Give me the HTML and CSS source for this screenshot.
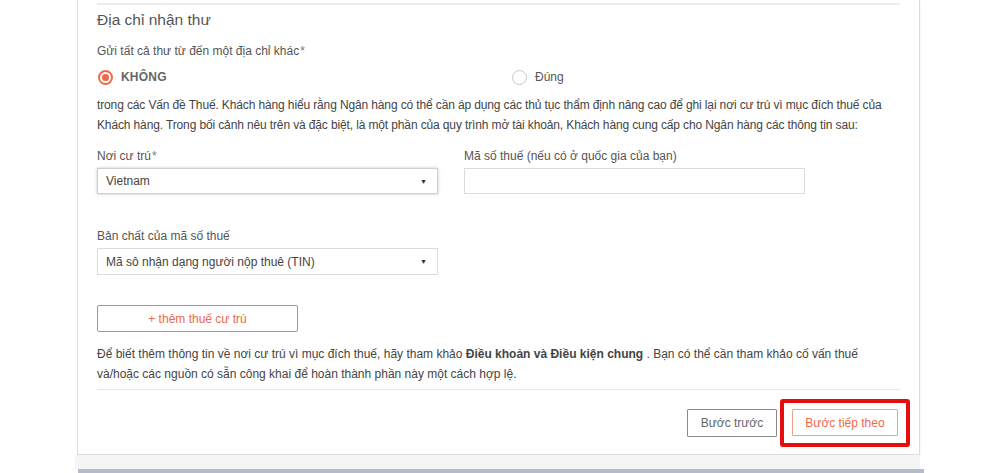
FILE: index.html
```html
<!DOCTYPE html>
<html lang="vi">
<head>
<meta charset="utf-8">
<link rel="stylesheet" href="styles.css">
</head>
<body>
<div class="page">
  <div class="card">
    <div class="top-rule"></div>
    <h2 class="title">Địa chỉ nhận thư</h2>
    <div class="label q">Gửi tất cả thư từ đến một địa chỉ khác<span class="star">*</span></div>
    <div class="radios">
      <label class="radio-item checked"><span class="radio"><span class="dot"></span></span><span class="rlabel strong">KHÔNG</span></label>
      <label class="radio-item"><span class="radio"></span><span class="rlabel">Đúng</span></label>
    </div>
    <p class="para first">trong các Vấn đề Thuế. Khách hàng hiểu rằng Ngân hàng có thể cần áp dụng các thủ tục thẩm định nâng cao để ghi lại nơi cư trú vì mục đích thuế của Khách hàng. Trong bối cảnh nêu trên và đặc biệt, là một phần của quy trình mở tài khoản, Khách hàng cung cấp cho Ngân hàng các thông tin sau:</p>
    <div class="row">
      <div class="field">
        <div class="label">Nơi cư trú<span class="star">*</span></div>
        <div class="select focused"><span>Vietnam</span><span class="caret">▼</span></div>
      </div>
      <div class="field">
        <div class="label">Mã số thuế (nếu có ở quốc gia của bạn)</div>
        <div class="input"></div>
      </div>
    </div>
    <div class="field solo">
      <div class="label">Bản chất của mã số thuế</div>
      <div class="select tall"><span>Mã sô nhận dạng người nộp thuê (TIN)</span><span class="caret">▼</span></div>
    </div>
    <button class="add-btn">+ thêm thuế cư trú</button>
    <p class="para second">Để biết thêm thông tin về nơi cư trú vì mục đích thuế, hãy tham khảo <b>Điều khoản và Điều kiện chung</b> . Bạn có thể cần tham khảo cố vấn thuế và/hoặc các nguồn có sẵn công khai để hoàn thành phần này một cách hợp lệ.</p>
    <div class="rule"></div>
    <div class="actions">
      <button class="btn prev">Bước trước</button>
      <div class="highlight"><button class="btn next">Bước tiếp theo</button></div>
    </div>
  </div>
  <div class="under"></div>
  <div class="bar"></div>
</div>
</body>
</html>
```

FILE: styles.css
```css
* { box-sizing: border-box; }
html, body { margin: 0; padding: 0; background: #fff; }
body {
  font-family: "Liberation Sans", Arial, sans-serif;
  font-size: 12px;
  color: #444;
  width: 1000px;
  height: 473px;
  overflow: hidden;
}
.page {
  margin-left: 77px;
  width: 843px;
}
.card {
  border: 1px solid #dcdcdc;
  border-top: none;
  height: 455px;
  padding: 3px 19px 0 19px;
  background: #fff;
  box-shadow: 1px 1px 2px rgba(0,0,0,0.04);
}
.top-rule { height: 2px; background: #ececec; }
.title {
  margin: 5px 0 0 0;
  font-weight: normal;
  font-size: 15.5px;
  line-height: 20px;
  color: #555;
}
.label { line-height: 16px; color: #555; font-size: 12px; }
.star { color: #777; margin-left: 1px; }
.q { margin-top: 13px; }
.radios {
  display: grid;
  grid-template-columns: 414px 1fr;
  margin-top: 8px;
  height: 20px;
  align-items: center;
}
.radio-item { display: flex; align-items: center; }
.radio {
  width: 15px; height: 15px;
  border-radius: 50%;
  border: 1px solid #c8c8c8;
  display: flex; align-items: center; justify-content: center;
  margin-left: 1px;
}
.checked .radio { border: 2px solid #ef6a4a; }
.dot { width: 7px; height: 7px; border-radius: 50%; background: #ef6a4a; }
.rlabel { margin-left: 8px; color: #555; }
.strong { font-weight: bold; color: #666; letter-spacing: 0.2px; }
.para { margin: 0; line-height: 20px; color: #444; }
.para.first { margin-top: 8px; letter-spacing: -0.13px; }
.row { display: flex; gap: 26px; margin-top: 13px; }
.field { display: flex; flex-direction: column; gap: 4px; width: 341px; }
.select, .input {
  height: 26px;
  border: 1px solid #dcdcdc;
  background: #fff;
  display: flex; align-items: center; justify-content: space-between;
  padding: 0 10px 0 8px;
  color: #444;
}
.select.focused { border-color: #cfcfcf; box-shadow: 0 0 3px rgba(0,0,0,0.22); }
.select.tall { height: 27px; }
.caret { font-size: 7px; color: #333; }
.solo { margin-top: 34px; }
.add-btn {
  margin-top: 30px;
  width: 201px; height: 27px;
  border: 1px solid #ef7b5c;
  border-radius: 2px;
  background: #fff;
  color: #ef6a4a;
  font-family: inherit;
  font-size: 12px;
  display: block;
}
.para.second { margin-top: 12px; }
.rule { height: 1px; background: #e6e6e6; margin-top: 5px; }
.actions {
  display: flex;
  justify-content: flex-end;
  align-items: center;
  margin-top: 9px;
  gap: 3px;
}
.btn {
  height: 28px;
  font-family: inherit;
  font-size: 12px;
  background: #fff;
}
.prev { width: 90px; border: 1px solid #8a8a8a; color: #666; border-radius: 1px; }
.highlight {
  border: 4px solid #e50d0d;
  border-radius: 3px;
  padding: 6px 8px 7px 8px;
  margin-right: -10px;
}
.next { width: 106px; height: 27px; border: 1px solid #f0a08a; color: #ef6a4a; border-radius: 1px; }
.under { height: 14px; background: #f5f5f5; margin-left: -2px; }
.bar { height: 4px; background: #b3bcc8; margin-left: 1px; margin-right: -4px; }
```
